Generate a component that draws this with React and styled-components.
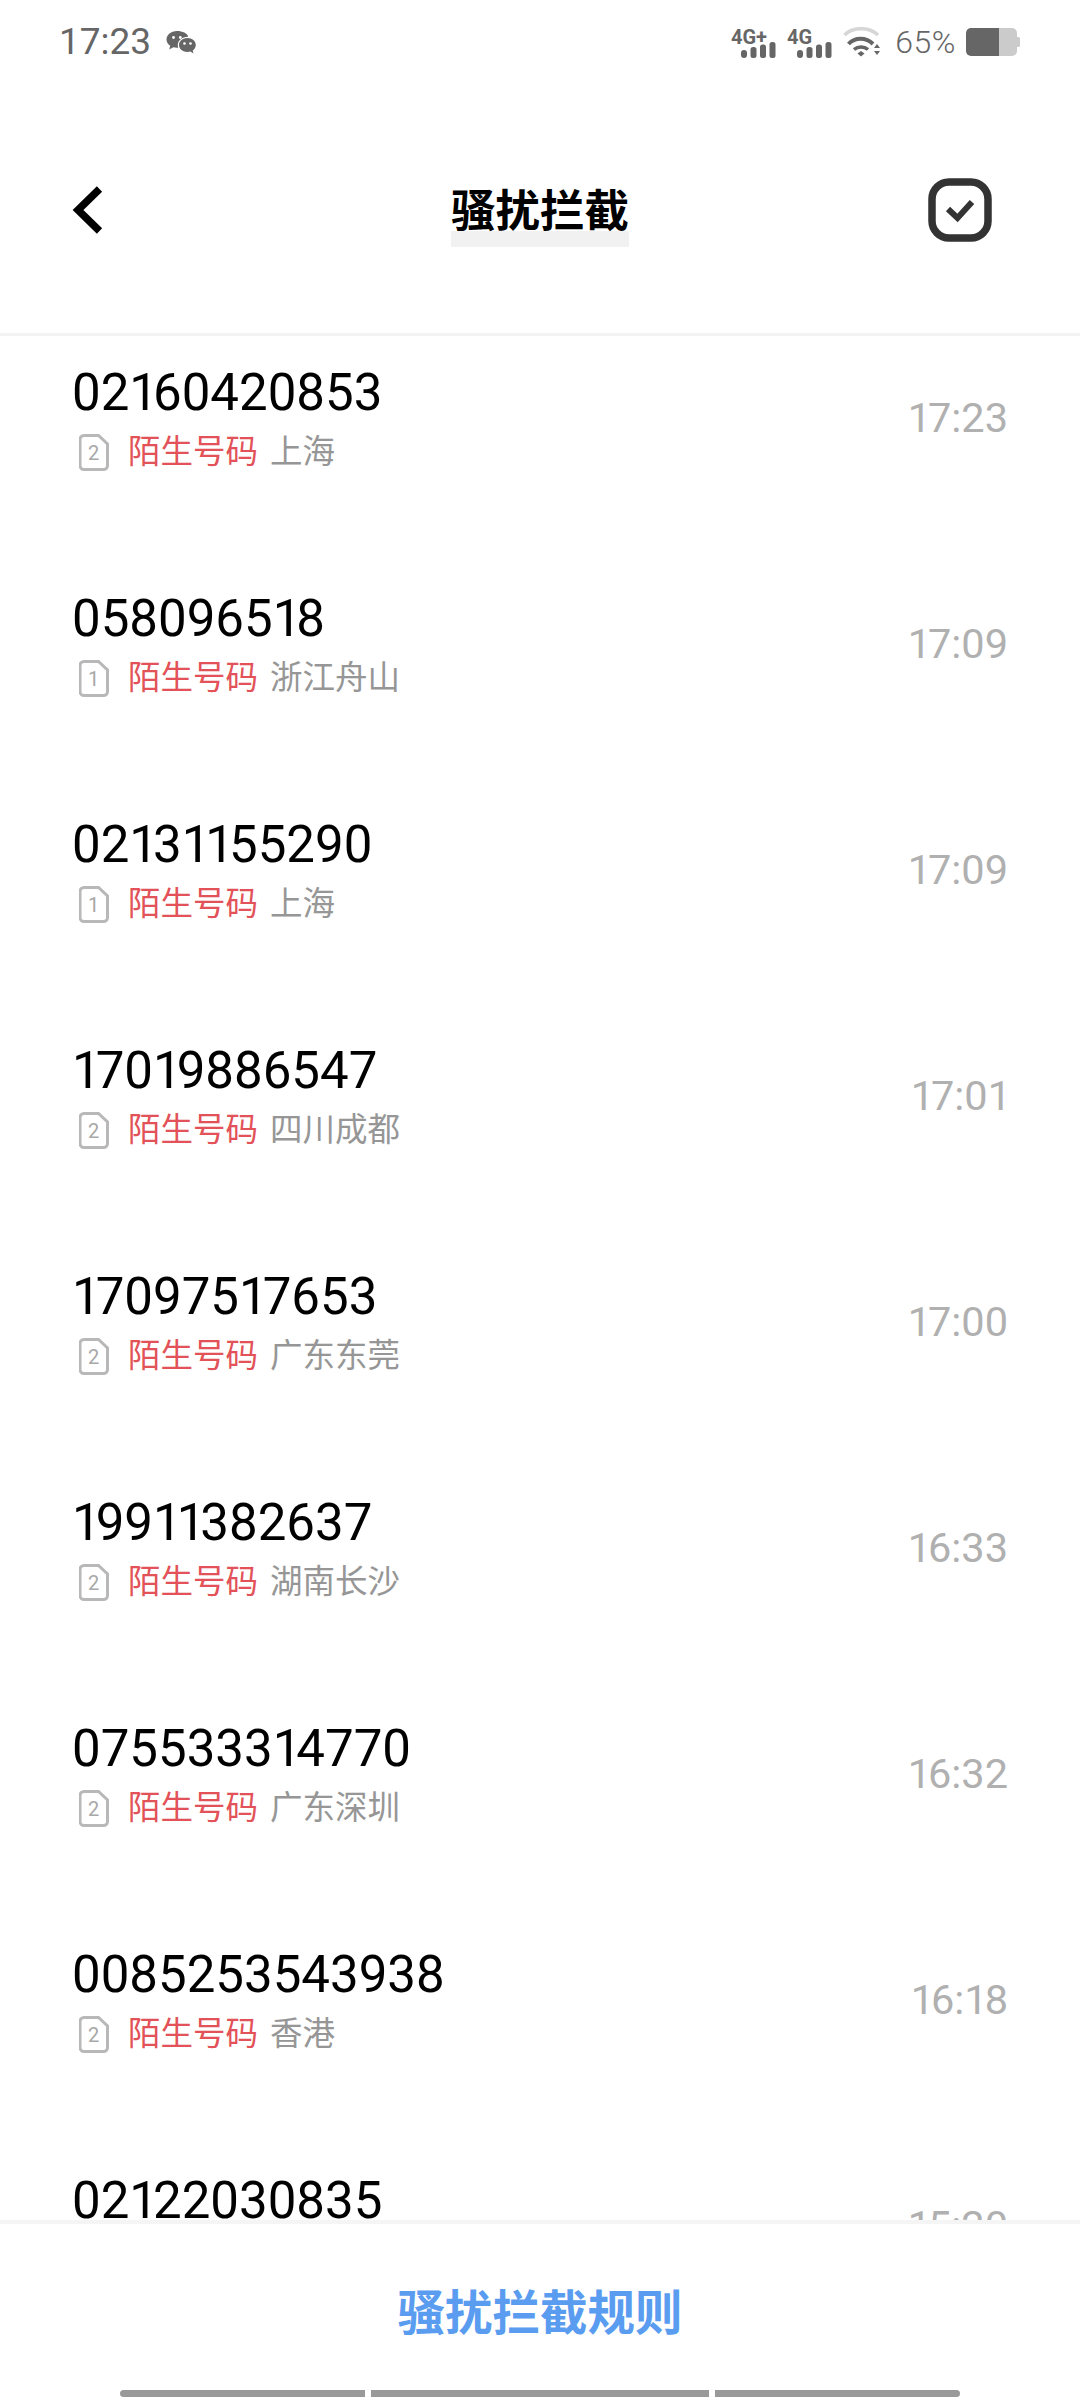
import React from 'react'
import styled, { createGlobalStyle } from 'styled-components'

const GlobalStyle = createGlobalStyle`
    html, body {
        margin: 0;
        padding: 0;
        background: #fff;
    }
`

const Page = styled.div`
    width: 1080px;
    height: 2400px;
    display: flex;
    flex-direction: column;
    overflow: hidden;
    background: #fff;
    font-family: Roboto, "Noto Sans CJK SC", sans-serif;
`

const StatusBar = styled.div`
    height: 84px;
    flex: none;
    display: flex;
    align-items: center;
    justify-content: space-between;
    padding: 0 60px 0 59px;
    color: #666;
`

const StatusGroup = styled.div`
    display: flex;
    align-items: center;
    gap: ${props => props.$gap}px;
`

const StatusTime = styled.span`
    font-size: 37px;
    line-height: 84px;
    font-weight: 400;
`

const Percent = styled.span`
    margin-left: 4px;
    font-size: 32px;
    font-weight: 300;
    letter-spacing: 0.5px;
`

const Header = styled.div`
    height: 252px;
    flex: none;
    box-sizing: border-box;
    display: grid;
    grid-template-columns: 1fr auto 1fr;
    align-items: start;
    padding: 94px 72px 0;
    border-bottom: 3px solid #f3f3f3;
`

const BackSlot = styled.div`
    margin-top: 7px;
`

const Title = styled.div`
    margin-top: 10px;
    height: 59px;
    font-size: 44.5px;
    line-height: 48px;
    font-weight: 700;
    color: #000;
    background: linear-gradient(#fff 0, #fff 43px, #f1f1f1 43px);
`

const HeaderRight = styled.div`
    justify-self: end;
    margin-right: 16px;
`

const List = styled.div`
    flex: 1;
    min-height: 0;
    overflow: hidden;
    display: flex;
    flex-direction: column;
    gap: 118px;
    padding: 27px 72px 0;
`

const Row = styled.div`
    height: 108px;
    flex: none;
    display: flex;
    align-items: center;
    justify-content: space-between;
`

const Info = styled.div`
    align-self: flex-start;
    display: flex;
    flex-direction: column;
`

const CallNumber = styled.div`
    font-size: 51px;
    line-height: 60px;
    color: #000;
`

/* the phone's font has a narrow 1, Roboto's digits are all one width */
const NarrowOne = styled.span`
    letter-spacing: ${props => props.$tight}px;
`

const Meta = styled.div`
    margin-top: 5px;
    display: flex;
    align-items: center;
    height: 48px;
    font-size: 32.5px;
    line-height: 48px;
`

const SimIcon = styled.svg`
    width: 30px;
    height: 37px;
    margin: 0 19px 0 7px;
    flex: none;
`

const Tag = styled.span`
    color: #e25258;
`

const Place = styled.span`
    margin-left: 12px;
    color: #969696;
`

const Time = styled.div`
    font-size: 41.5px;
    color: #b0b0b0;
`

const Footer = styled.div`
    height: 180px;
    flex: none;
    box-sizing: border-box;
    background: #fff;
    border-top: 4px solid #f5f5f5;
    display: flex;
    flex-direction: column;
    align-items: center;
`

const Rules = styled.div`
    margin-top: 62px;
    font-size: 47.5px;
    line-height: 56px;
    font-weight: 700;
    color: #5a9cf0;
`

const NavBar = styled.div`
    margin-top: auto;
    margin-bottom: 3px;
    display: flex;
    gap: 6px;
`

const NavSegment = styled.div`
    height: 7px;
    width: ${props => props.$width}px;
    background: #999;
    border-radius: ${props => props.$radius};
`

const WeChatSvg = styled.svg`
    margin: 2px 0 0 15px;
`

const WeChatIcon = () => (
    <WeChatSvg width="30" height="26" viewBox="0 0 30 26">
        <path fill="#666" d="M11 1C5 1 .5 4.800.5 9.400c0 2.600 1.400 4.800 3.700 6.400L3.300 19.500l4-2.200c1.100.3 2.300.5 3.500.5.500 0 1 0 1.400-.1-.3-.9-.4-1.700-.4-2.600 0-4.700 4.400-8.400 9.900-8.400h.6C21.300 3.300 16.600 1 11 1z" />
        <circle cx="7.5" cy="7.5" r="1.4" fill="#fff" />
        <circle cx="14.3" cy="7.5" r="1.4" fill="#fff" />
        <path fill="#666" d="M21.500 8C16.800 8 13 11.100 13 15c0 3.900 3.800 7 8.500 7 1 0 2-.1 2.900-.4l3.100 1.900-.8-3c1.900-1.300 3.100-3.300 3.100-5.500C29.800 11.100 26.100 8 21.500 8z" />
        <circle cx="18.5" cy="13.5" r="1.3" fill="#fff" />
        <circle cx="24.5" cy="13.5" r="1.3" fill="#fff" />
    </WeChatSvg>
)

const SignalIcon = ({ label }) => (
    <svg width="46" height="36" viewBox="0 0 46 36">
        <text x="0" y="20" fontFamily="Roboto, sans-serif" fontWeight="700" fontSize="20" fill="#666">{label}</text>
        <rect x="10" y="26" width="6" height="8" rx="3" fill="#666" />
        <rect x="19.500" y="23" width="6" height="11" rx="2.5" fill="#666" />
        <rect x="29" y="20.500" width="6" height="13.500" rx="2.5" fill="#666" />
        <rect x="38.500" y="18" width="6" height="16" rx="2.5" fill="#666" />
    </svg>
)

const WifiIcon = () => (
    <svg width="38" height="30" viewBox="0 0 38 30">
        <path d="M1.500 8C10 -.5 26 -.5 35 8" fill="none" stroke="#d6d6d6" strokeWidth="3.5" />
        <path d="M5.500 17C12 10 23 10 30 17" fill="none" stroke="#666" strokeWidth="4" />
        <path d="M11 22.500C15 19 21 19 25 22.500" fill="none" stroke="#666" strokeWidth="3.5" />
        <path d="M14.500 26.500l3.500-2.500 3.500 2.500-3.500 3z" fill="#666" />
        <path d="M31 21l3-4 3 4zM31 24h6l-3 4z" fill="#666" />
    </svg>
)

const BatteryIcon = () => (
    <svg width="54" height="28" viewBox="0 0 54 28">
        <path d="M33 0h13a5 5 0 0 1 5 5v18a5 5 0 0 1-5 5H33z" fill="#cbcbcb" />
        <path d="M5 0h28v28H5a5 5 0 0 1-5-5V5a5 5 0 0 1 5-5z" fill="#666" />
        <path d="M51 9h1.500a1.500 1.500 0 0 1 1.500 1.500v7a1.500 1.500 0 0 1-1.500 1.500H51z" fill="#cbcbcb" />
    </svg>
)

const BackIcon = () => (
    <svg width="32" height="50" viewBox="0 0 32 50" style={{ display: 'block' }}>
        <path d="M27.500 4L6 25l21.500 21" fill="none" stroke="#000" strokeWidth="7.5" />
    </svg>
)

const CheckIcon = () => (
    <svg width="64" height="64" viewBox="0 0 64 64" style={{ display: 'block' }}>
        <rect x="4" y="4" width="56" height="56" rx="17" fill="none" stroke="#333" strokeWidth="7.5" />
        <path d="M20 31l9.500 9L44 24" fill="none" stroke="#333" strokeWidth="6" />
    </svg>
)

const Sim = ({ slot }) => (
    <SimIcon viewBox="0 0 30 37">
        <path d="M5 1.500h14.500L28.500 10v21.500a4 4 0 0 1-4 4H5a4 4 0 0 1-4-4v-26a4 4 0 0 1 4-4z" fill="none" stroke="#b8b8b8" strokeWidth="3" />
        <text x="14.5" y="26" textAnchor="middle" fontFamily="Roboto, sans-serif" fontSize="20" fill="#a8a8a8">{slot}</text>
    </SimIcon>
)

const Digits = ({ text, tight }) => (
    <>
        {text.split(/(1)/).map((part, i) =>
            part === '1'
                ? <NarrowOne key={i} $tight={tight}>1</NarrowOne>
                : part
        )}
    </>
)

const calls = [
    { number: '02160420853', slot: 2, place: '上海', time: '17:23' },
    { number: '058096518', slot: 1, place: '浙江舟山', time: '17:09' },
    { number: '02131155290', slot: 1, place: '上海', time: '17:09' },
    { number: '17019886547', slot: 2, place: '四川成都', time: '17:01' },
    { number: '17097517653', slot: 2, place: '广东东莞', time: '17:00' },
    { number: '19911382637', slot: 2, place: '湖南长沙', time: '16:33' },
    { number: '075533314770', slot: 2, place: '广东深圳', time: '16:32' },
    { number: '0085253543938', slot: 2, place: '香港', time: '16:18' },
    { number: '02122030835', slot: 2, place: '上海', time: '15:20' },
]

const App = () => {
    return (
        <Page>
            <GlobalStyle />
            <StatusBar>
                <StatusGroup>
                    <StatusTime>17:23</StatusTime>
                    <WeChatIcon />
                </StatusGroup>
                <StatusGroup $gap={10}>
                    <SignalIcon label="4G+" />
                    <SignalIcon label="4G" />
                    <WifiIcon />
                    <Percent>65%</Percent>
                    <BatteryIcon />
                </StatusGroup>
            </StatusBar>
            <Header>
                <BackSlot><BackIcon /></BackSlot>
                <Title>骚扰拦截</Title>
                <HeaderRight><CheckIcon /></HeaderRight>
            </Header>
            <List>
                {calls.map(call => (
                    <Row key={call.number}>
                        <Info>
                            <CallNumber><Digits text={call.number} tight={-5} /></CallNumber>
                            <Meta>
                                <Sim slot={call.slot} />
                                <Tag>陌生号码</Tag>
                                <Place>{call.place}</Place>
                            </Meta>
                        </Info>
                        <Time><Digits text={call.time} tight={-3} /></Time>
                    </Row>
                ))}
            </List>
            <Footer>
                <Rules>骚扰拦截规则</Rules>
                <NavBar>
                    <NavSegment $width={245} $radius="4px 0 0 4px" />
                    <NavSegment $width={338} $radius="0" />
                    <NavSegment $width={245} $radius="0 4px 4px 0" />
                </NavBar>
            </Footer>
        </Page>
    )
}

export default App
